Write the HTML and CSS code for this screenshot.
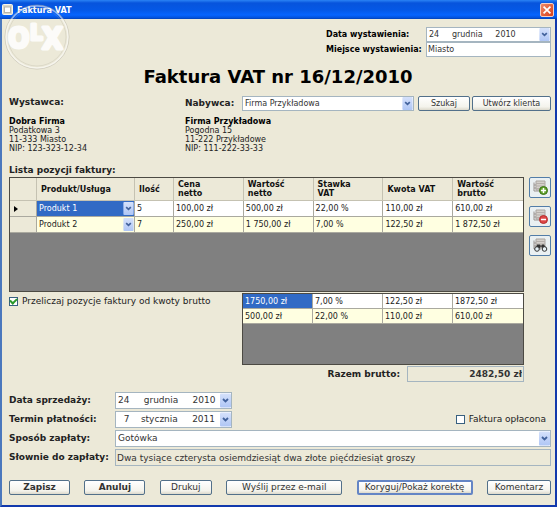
FILE: index.html
```html
<!DOCTYPE html>
<html lang="pl">
<head>
<meta charset="utf-8">
<title>Faktura VAT</title>
<link rel="stylesheet" href="styles.css">
</head>
<body>
<svg class="defs" width="0" height="0" aria-hidden="true">
  <defs>
    <linearGradient id="arrow-bg" x1="0" y1="0" x2="0" y2="1">
      <stop offset="0" stop-color="#d5e1fb"/><stop offset="1" stop-color="#afc6f5"/>
    </linearGradient>
    <symbol id="arrow" viewBox="0 0 11 14">
      <rect width="11" height="14" rx="1" fill="url(#arrow-bg)"/>
      <path d="M3 5.5 5.5 8 8 5.5" fill="none" stroke="#42629c" stroke-width="1.8"/>
    </symbol>
    <symbol id="list" viewBox="0 0 15 15">
      <path d="M3 1h9v9H3z" fill="#d4d0cb" stroke="#aaa5a0"/>
      <path d="M3 3.500h9M3 6h9M3 8.500h9" stroke="#b5afab"/>
      <path d="M1 2.500v8.500h7M1 5h2M1 8h2" fill="none" stroke="#99928e"/>
    </symbol>
  </defs>
</svg>
<div class="window">
  <header class="titlebar">
    <svg class="app-icon" viewBox="0 0 11 11" aria-hidden="true"><rect x=".5" y=".5" width="10" height="10" rx="1" fill="#d9d6ca" stroke="#f9f6e8"/><rect x="2.500" y="3" width="6" height="5.500" fill="#fff" stroke="#b5b4aa"/></svg>
    <span class="caption">Faktura VAT</span>
    <button class="close" type="button" aria-label="Zamknij"><svg viewBox="0 0 14 14"><path d="m3 3 8 8m0-8-8 8" stroke="#fff" stroke-width="2"/></svg></button>
  </header>
  <svg class="watermark" viewBox="0 0 68 68" aria-hidden="true">
    <circle cx="34" cy="34" r="32" fill="none" stroke="#aaa797" stroke-opacity=".45"/>
    <circle cx="34" cy="34" r="31" fill="none" stroke="#fff" stroke-opacity=".55" stroke-width="1.500"/>
    <circle cx="34" cy="34" r="29" fill="none" stroke="#aaa797" stroke-opacity=".25"/>
    <g class="mark"><text x="5" y="45" font-size="28">O</text><text x="27" y="37" font-size="22">L</text><text x="39" y="46" font-size="30">X</text></g>
  </svg>
  <form class="content">
    <section class="issue">
      <label for="issued">Data wystawienia:</label>
      <div class="combo"><select id="issued"><option>24 &nbsp; &nbsp; grudnia &nbsp; &nbsp; 2010</option></select><svg class="arrow"><use href="#arrow"/></svg></div>
      <label for="place">Miejsce wystawienia:</label>
      <input id="place" type="text" value="Miasto">
    </section>
    <h1>Faktura VAT nr 16/12/2010</h1>
    <section class="parties">
      <h2>Wystawca:</h2>
      <div class="buyer">
        <label for="buyer">Nabywca:</label>
        <div class="combo"><select id="buyer"><option>Firma Przykładowa</option></select><svg class="arrow"><use href="#arrow"/></svg></div>
        <button class="search" type="button">Szukaj</button>
        <button class="create" type="button">Utwórz klienta</button>
      </div>
      <address><strong>Dobra Firma</strong><br>Podatkowa 3<br>11-333 Miasto<br>NIP: 123-323-12-34</address>
      <address><strong>Firma Przykładowa</strong><br>Pogodna 15<br>11-222 Przykładowe<br>NIP: 111-222-33-33</address>
    </section>
    <h2>Lista pozycji faktury:</h2>
    <section class="items">
      <div class="grid main-grid">
        <table>
          <colgroup><col class="c-mark"><col class="c-product"><col class="c-count"><col span="5"></colgroup>
          <thead><tr><th></th><th>Produkt/Usługa</th><th>Ilość</th><th>Cena<br>netto</th><th>Wartość<br>netto</th><th>Stawka<br>VAT</th><th>Kwota VAT</th><th>Wartość<br>brutto</th></tr></thead>
          <tbody>
            <tr><td class="mark-cell"><svg viewBox="0 0 4 6" aria-hidden="true"><path d="M0 0 4 3 0 6z"/></svg></td><td class="product selected"><div class="combo"><select aria-label="Produkt 1"><option>Produkt 1</option></select><svg class="arrow"><use href="#arrow"/></svg></div></td><td>5</td><td>100,00 zł</td><td>500,00 zł</td><td>22,00 %</td><td>110,00 zł</td><td>610,00 zł</td></tr>
            <tr><td class="mark-cell"></td><td class="product"><div class="combo"><select aria-label="Produkt 2"><option>Produkt 2</option></select><svg class="arrow"><use href="#arrow"/></svg></div></td><td>7</td><td>250,00 zł</td><td>1 750,00 zł</td><td>7,00 %</td><td>122,50 zł</td><td>1 872,50 zł</td></tr>
          </tbody>
        </table>
      </div>
      <div class="tools">
        <button type="button" aria-label="Dodaj pozycję"><svg viewBox="0 0 15 15"><use href="#list"/><circle cx="10.500" cy="10.500" r="4" fill="#62a32c" stroke="#397216"/><path d="M8 10.500h5M10.500 8v5" stroke="#fff" stroke-width="1.500"/></svg></button>
        <button type="button" aria-label="Usuń pozycję"><svg viewBox="0 0 15 15"><use href="#list"/><circle cx="10.500" cy="10.500" r="4" fill="#dd4545" stroke="#b62d2d"/><path d="M8 10.500h5" stroke="#fff" stroke-width="1.500"/></svg></button>
        <button type="button" aria-label="Znajdź pozycję"><svg viewBox="0 0 15 15"><use href="#list"/><path d="M4 6.500 3 10h4l1-2 1 2h4l-2-3.500H9L8 8 7 6.500z" fill="#333"/><circle cx="4" cy="11" r="2.300" fill="#e5f0f5" stroke="#333"/><circle cx="11.500" cy="11" r="2.300" fill="#e5f0f5" stroke="#333"/></svg></button>
      </div>
    </section>
    <section class="summary">
      <label class="check"><input type="checkbox" checked>Przeliczaj pozycje faktury od kwoty brutto</label>
      <div class="totals">
        <div class="grid sum-grid">
          <table><tbody>
            <tr><td class="selected">1750,00 zł</td><td>7,00 %</td><td>122,50 zł</td><td>1872,50 zł</td></tr>
            <tr><td>500,00 zł</td><td>22,00 %</td><td>110,00 zł</td><td>610,00 zł</td></tr>
          </tbody></table>
        </div>
        <div class="total"><label for="total">Razem brutto:</label><input id="total" type="text" value="2482,50 zł" readonly></div>
      </div>
    </section>
    <section class="payment">
      <label for="sold">Data sprzedaży:</label>
      <div class="combo date"><select id="sold"><option>24 &nbsp; &nbsp; grudnia &nbsp; &nbsp; 2010</option></select><svg class="arrow"><use href="#arrow"/></svg></div>
      <label for="due">Termin płatności:</label>
      <div class="due">
        <div class="combo date"><select id="due"><option>&nbsp; 7 &nbsp; &nbsp;stycznia &nbsp; &nbsp; 2011</option></select><svg class="arrow"><use href="#arrow"/></svg></div>
        <label class="check"><input type="checkbox">Faktura opłacona</label>
      </div>
      <label for="method">Sposób zapłaty:</label>
      <div class="combo"><select id="method"><option>Gotówka</option></select><svg class="arrow"><use href="#arrow"/></svg></div>
      <label for="words">Słownie do zapłaty:</label>
      <input id="words" type="text" value="Dwa tysiące czterysta osiemdziesiąt dwa złote pięćdziesiąt groszy" readonly>
    </section>
    <footer class="actions">
      <button class="strong" type="submit">Zapisz</button>
      <button class="strong" type="button">Anuluj</button>
      <button class="print" type="button">Drukuj</button>
      <button class="wide" type="button">Wyślij przez e-mail</button>
      <button class="wide default" type="button">Koryguj/Pokaż korektę</button>
      <button class="comment" type="button">Komentarz</button>
    </footer>
  </form>
</div>
</body>
</html>
```
FILE: styles.css
```css
* { box-sizing: border-box; }

body {
  margin: 0;
  background: #ece9d8;
  color: #222;
  font: 9px/9px "DejaVu Sans", Verdana, sans-serif;
}

.defs { position: absolute; }

.window {
  position: relative;
  display: flex;
  flex-direction: column;
  min-height: 100vh;
  border: solid #1239ad;
  border-width: 0 2px 2px;
  border-left-color: #4b78bd;
}

.titlebar {
  display: flex;
  align-items: center;
  gap: 4px;
  height: 19px;
  margin: 0 -2px;
  padding: 0 3px 0 2px;
  background: linear-gradient(#2b83f5 0, #0754dc 3px, #0558e6 10px, #0665ff 15px, #0350d8 18px, #0340b0);
  color: #fff;
}

.app-icon { width: 11px; height: 11px; }

.caption {
  flex: 1;
  font: bold 9px/12px "DejaVu Sans Condensed", "DejaVu Sans", sans-serif;
}

.watermark {
  position: absolute;
  top: 3px;
  left: 1px;
  width: 68px;
  height: 68px;
  pointer-events: none;
}

.mark {
  fill: #fff;
  stroke: #fff;
  stroke-width: 3;
  stroke-linejoin: round;
  opacity: .85;
  font-family: "DejaVu Sans Condensed", "DejaVu Sans", sans-serif;
  font-weight: bold;
}

button,
input,
select {
  margin: 0;
  border: 1px solid #a5b5c0;
  border-radius: 0;
  background: #fff;
  color: #333;
  font: inherit;
}

button {
  height: 15px;
  padding: 0;
  border-color: #52708a;
  border-radius: 2px;
  background: linear-gradient(#fff, #f4f3ec 75%, #dcd9cc);
  white-space: nowrap;
}

.close {
  width: 14px;
  height: 14px;
  border-color: #f4cfc5;
  background: linear-gradient(135deg, #ee8968, #d8401c);
}

.close svg { display: block; width: 12px; height: 12px; }

.content {
  flex: 1;
  padding: 8px 4px 8px 7px;
}

h1 {
  margin: 9px 4px 8px 0;
  color: #000;
  font-size: 18px;
  line-height: 22px;
  text-align: center;
}

h2,
.buyer label {
  margin: 0;
  font-size: 9px;
  font-weight: bold;
  line-height: 13px;
}

.combo { position: relative; }

.combo select {
  display: block;
  width: 100%;
  height: 100%;
  padding: 0 12px 0 2px;
  appearance: none;
}

.arrow {
  position: absolute;
  top: 1px;
  right: 1px;
  width: 11px;
  height: calc(100% - 2px);
  pointer-events: none;
}

.issue {
  display: grid;
  grid-template-columns: 100px 125px;
  grid-auto-rows: 15px;
  align-items: center;
  justify-content: end;
  color: #000;
  font-size: 8px;
  font-weight: bold;
}

.issue .combo,
.issue input { height: 15px; font-weight: normal; }

.issue label { white-space: nowrap; }

.issue input { width: 100%; padding: 0 1px; }

.parties {
  display: grid;
  grid-template-columns: 176px 1fr;
  row-gap: 6px;
  margin-bottom: 11px;
}

.buyer {
  display: flex;
  align-items: center;
  font-size: 8px;
}

.buyer label { width: 57px; }

.buyer .combo {
  flex: 1;
  height: 15px;
  margin-right: 4px;
}

.search { width: 52px; margin-right: 2px; }

.create { width: 79px; }

address { font-size: 8px; font-style: normal; }

address strong { color: #000; }

.items {
  display: flex;
  gap: 5px;
}

.grid {
  border: 1px solid #4c4a43;
  background: #808080;
}

.main-grid { flex: 1; height: 115px; }

table {
  width: 100%;
  table-layout: fixed;
  border-spacing: 0;
  background: #fff;
  font-size: 8px;
}

.c-mark { width: 27px; }

.c-product { width: 98px; }

.c-count { width: 39px; }

th {
  height: 23px;
  padding: 0 4px;
  border: solid #c5c2b2;
  border-width: 0 1px 1px 0;
  background: #ece9d8;
  color: #111;
  text-align: left;
}

td {
  height: 16px;
  padding: 0 2px;
  border: solid #aaa99f;
  border-width: 0 1px 1px 0;
}

tr > :last-child { border-right: 0; }

tbody tr:nth-child(2) { background: #ffffe1; }

.selected { background: #316ac5; color: #fff; }

.mark-cell { padding-left: 4px; background: #ece9d8; }

.mark-cell svg { display: block; width: 4px; height: 6px; }

td.product { padding: 0; }

.product .combo { height: 15px; }

.product select { border: 0; background: transparent; color: inherit; }

.product .arrow { right: 0; }

.tools {
  display: flex;
  flex-direction: column;
  gap: 8px;
}

.tools button {
  width: 22px;
  height: 21px;
  padding: 2px;
  border-color: #527da8;
  background: #eaf0f2;
}

.tools svg { display: block; width: 15px; height: 15px; margin: auto; }

.summary {
  display: flex;
  align-items: flex-start;
  justify-content: space-between;
  margin: 1px 27px 10px 0;
}

.check {
  display: flex;
  align-items: center;
  gap: 4px;
}

.check input {
  display: grid;
  width: 9px;
  height: 9px;
  border-color: #386080;
  appearance: none;
  place-items: center;
}

.check input:checked::before {
  width: 5px;
  height: 3px;
  border: solid #299829;
  border-width: 0 0 2px 2px;
  content: "";
  transform: translateY(-1px) rotate(-45deg);
}

.summary .check { margin-top: 4px; }

.totals { width: 282px; }

.sum-grid { height: 72px; }

.sum-grid td { height: 15px; }

.total {
  display: flex;
  align-items: center;
  justify-content: flex-end;
  gap: 7px;
  margin-top: 1px;
  font-weight: bold;
}

.total input {
  width: 117px;
  height: 16px;
  padding: 0 1px;
  background: #ece9d8;
  text-align: right;
}

.payment {
  display: grid;
  grid-template-columns: 106px 1fr;
  grid-auto-rows: 17px;
  row-gap: 2px;
  align-items: center;
}

.payment > label { font-weight: bold; white-space: nowrap; }

.payment .combo,
.payment > input { height: 17px; }

.payment > input { width: 100%; padding: 0 1px; background: #ece9d8; }

.date { width: 117px; }

.due {
  display: flex;
  align-items: center;
  justify-content: space-between;
  padding-right: 5px;
}

.actions {
  display: flex;
  justify-content: space-between;
  margin-top: 14px;
}

.strong { width: 61px; font-weight: bold; }

.print { width: 52px; }

.wide { width: 116px; }

.comment { width: 64px; }

.default { border: 2px solid #6485c5; }
```
